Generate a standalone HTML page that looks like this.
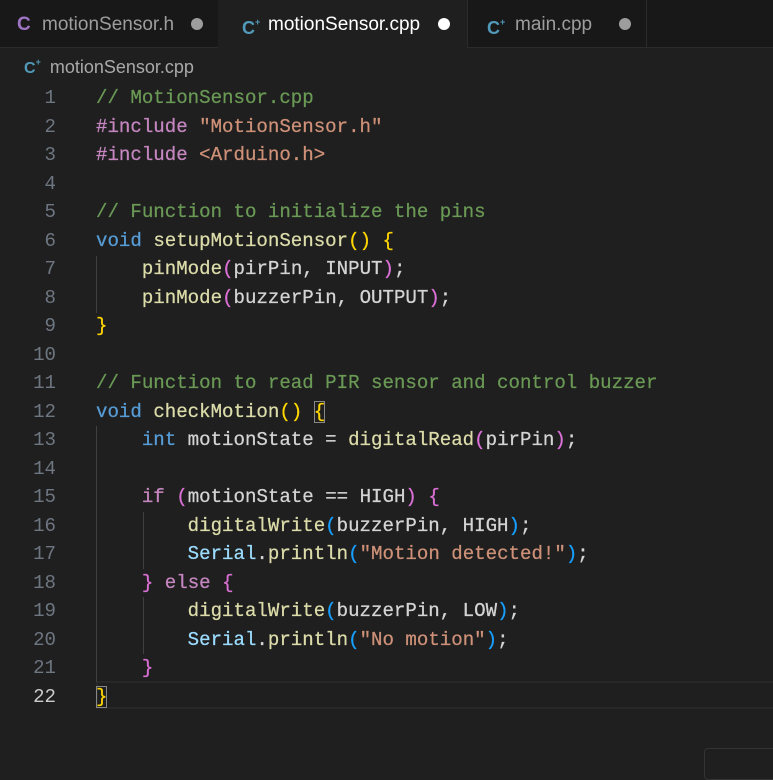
<!DOCTYPE html>
<html><head><meta charset="utf-8"><style>
body{margin:0;width:773px;height:764px;background:#1f1f1f;overflow:hidden;position:relative;font-family:"Liberation Sans",sans-serif}
.tabs{position:absolute;left:0;top:0;width:773px;height:47px;background:#181818;border-bottom:1px solid #2b2b2b}
.tab{position:absolute;top:0;height:47px;border-right:1px solid #2b2b2b;font-size:19px;color:#9d9d9d;line-height:49px}
.tab.act{background:#1f1f1f;height:48px;color:#fff}
.tab span{position:absolute}
.dot{position:absolute;top:18px;width:12px;height:12px;border-radius:50%;background:#9d9d9d}
.cpp{color:#519aba;font-weight:bold;font-size:18px}
.cpp sup{font-size:9px;position:relative;top:-2px}
.crumb{position:absolute;left:24px;top:57px;font-size:18px;color:#a9a9a9}
.code{position:absolute;left:0;top:84px;font-family:"Liberation Mono",monospace;font-size:19.1px;-webkit-text-stroke:0.25px}
.ln{position:absolute;left:0;width:56px;text-align:right;color:#6e7681;height:28.5px;line-height:28.5px;-webkit-text-stroke:0}
.l{position:absolute;left:96px;white-space:pre;color:#d4d4d4;height:28.5px;line-height:28.5px}
.c{color:#6a9955}.k{color:#569cd6}.p{color:#c586c0}.s{color:#ce9178}.f{color:#dcdcaa}.v{color:#9cdcfe}
.y{color:#ffd700}.m{color:#da70d6}.b{color:#179fff}
.g{position:absolute;width:1px;background:#404040}
</style></head><body>
<div class="tabs">
<div class="tab" style="left:0;width:218px"><span style="left:17px;color:#a074c4;font-weight:bold">C</span><span style="left:42px">motionSensor.h</span><div class="dot" style="left:191px"></div></div>
<div class="tab act" style="left:218px;width:249px"><span class="cpp" style="left:24px">C<sup>+</sup></span><span style="left:50px">motionSensor.cpp</span><div class="dot" style="left:220px;background:#fff"></div></div>
<div class="tab" style="left:467px;width:179px"><span class="cpp" style="left:20px">C<sup>+</sup></span><span style="left:48px">main.cpp</span><div class="dot" style="left:152px"></div></div>
</div>
<div class="crumb"><span class="cpp" style="font-size:16px">C<sup>+</sup></span> <span style="margin-left:4px">motionSensor.cpp</span></div>
<div style="position:absolute;left:96px;top:681px;width:677px;height:24px;border:2px solid #282828;border-right:none"></div>
<div style="position:absolute;left:704px;top:748px;width:80px;height:30px;border:1px solid #333;border-radius:4px;background:#1f1f1f"></div>
<div class="g" style="left:96px;top:256px;height:57px"></div>
<div class="g" style="left:96px;top:426px;height:256px"></div>
<div class="g" style="left:143px;top:512px;height:57px"></div>
<div class="g" style="left:143px;top:597px;height:57px"></div>
<div class="code">
<div class="ln" style="top:0">1</div><div class="l" style="top:0"><span class="c">// MotionSensor.cpp</span></div>
<div class="ln" style="top:28.5px">2</div><div class="l" style="top:28.5px"><span class="p">#include</span> <span class="s">"MotionSensor.h"</span></div>
<div class="ln" style="top:57px">3</div><div class="l" style="top:57px"><span class="p">#include</span> <span class="s">&lt;Arduino.h&gt;</span></div>
<div class="ln" style="top:85.5px">4</div>
<div class="ln" style="top:114px">5</div><div class="l" style="top:114px"><span class="c">// Function to initialize the pins</span></div>
<div class="ln" style="top:142.5px">6</div><div class="l" style="top:142.5px"><span class="k">void</span> <span class="f">setupMotionSensor</span><span class="y">()</span> <span class="y">{</span></div>
<div class="ln" style="top:171px">7</div><div class="l" style="top:171px">    <span class="f">pinMode</span><span class="m">(</span>pirPin, INPUT<span class="m">)</span>;</div>
<div class="ln" style="top:199.5px">8</div><div class="l" style="top:199.5px">    <span class="f">pinMode</span><span class="m">(</span>buzzerPin, OUTPUT<span class="m">)</span>;</div>
<div class="ln" style="top:228px">9</div><div class="l" style="top:228px"><span class="y">}</span></div>
<div class="ln" style="top:256.5px">10</div>
<div class="ln" style="top:285px">11</div><div class="l" style="top:285px"><span class="c">// Function to read PIR sensor and control buzzer</span></div>
<div class="ln" style="top:313.5px">12</div><div class="l" style="top:313.5px"><span class="k">void</span> <span class="f">checkMotion</span><span class="y">()</span> <span class="y" style="outline:1px solid #888;outline-offset:-1px">{</span></div>
<div class="ln" style="top:342px">13</div><div class="l" style="top:342px">    <span class="k">int</span> motionState = <span class="f">digitalRead</span><span class="m">(</span>pirPin<span class="m">)</span>;</div>
<div class="ln" style="top:370.5px">14</div>
<div class="ln" style="top:399px">15</div><div class="l" style="top:399px">    <span class="p">if</span> <span class="m">(</span>motionState == HIGH<span class="m">)</span> <span class="m">{</span></div>
<div class="ln" style="top:427.5px">16</div><div class="l" style="top:427.5px">        <span class="f">digitalWrite</span><span class="b">(</span>buzzerPin, HIGH<span class="b">)</span>;</div>
<div class="ln" style="top:456px">17</div><div class="l" style="top:456px">        <span class="v">Serial</span>.<span class="f">println</span><span class="b">(</span><span class="s">"Motion detected!"</span><span class="b">)</span>;</div>
<div class="ln" style="top:484.5px">18</div><div class="l" style="top:484.5px">    <span class="m">}</span> <span class="p">else</span> <span class="m">{</span></div>
<div class="ln" style="top:513px">19</div><div class="l" style="top:513px">        <span class="f">digitalWrite</span><span class="b">(</span>buzzerPin, LOW<span class="b">)</span>;</div>
<div class="ln" style="top:541.5px">20</div><div class="l" style="top:541.5px">        <span class="v">Serial</span>.<span class="f">println</span><span class="b">(</span><span class="s">"No motion"</span><span class="b">)</span>;</div>
<div class="ln" style="top:570px">21</div><div class="l" style="top:570px">    <span class="m">}</span></div>
<div class="ln" style="top:598.5px;color:#ccc">22</div><div class="l" style="top:598.5px"><span class="y" style="outline:1px solid #888;outline-offset:-1px">}</span></div>
</div>
</body></html>
